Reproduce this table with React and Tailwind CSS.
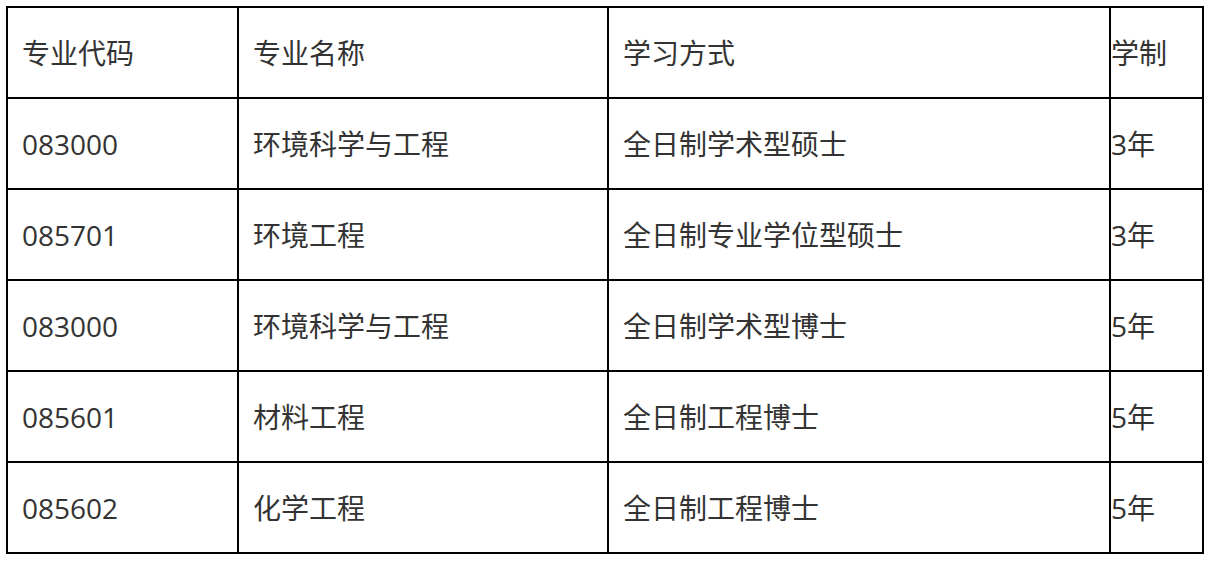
import React from 'react';

const rows = [
  ['083000', '环境科学与工程', '全日制学术型硕士', '3年'],
  ['085701', '环境工程', '全日制专业学位型硕士', '3年'],
  ['083000', '环境科学与工程', '全日制学术型博士', '5年'],
  ['085601', '材料工程', '全日制工程博士', '5年'],
  ['085602', '化学工程', '全日制工程博士', '5年'],
];

const head = ['专业代码', '专业名称', '学习方式', '学制'];

export default function App() {
  return (
    <div className="min-h-screen bg-white pl-[6px] pt-[6px]">
      <table
        className="border-collapse table-fixed text-[28px] leading-none text-[#333]"
        style={{ fontFamily: '"Open Sans", "Noto Sans CJK SC", sans-serif' }}
      >
        <colgroup>
          <col className="w-[231px]" />
          <col className="w-[370px]" />
          <col className="w-[502px]" />
          <col className="w-[93px]" />
        </colgroup>
        <tbody>
          {[head, ...rows].map((r, i) => (
            <tr key={i} className="h-[91px]">
              {r.map((c, j) => (
                <td
                  key={j}
                  className={
                    'border-2 border-black align-middle ' +
                    (j === 3 ? 'pl-0' : 'pl-[14px]')
                  }
                >
                  {c}
                </td>
              ))}
            </tr>
          ))}
        </tbody>
      </table>
    </div>
  );
}
